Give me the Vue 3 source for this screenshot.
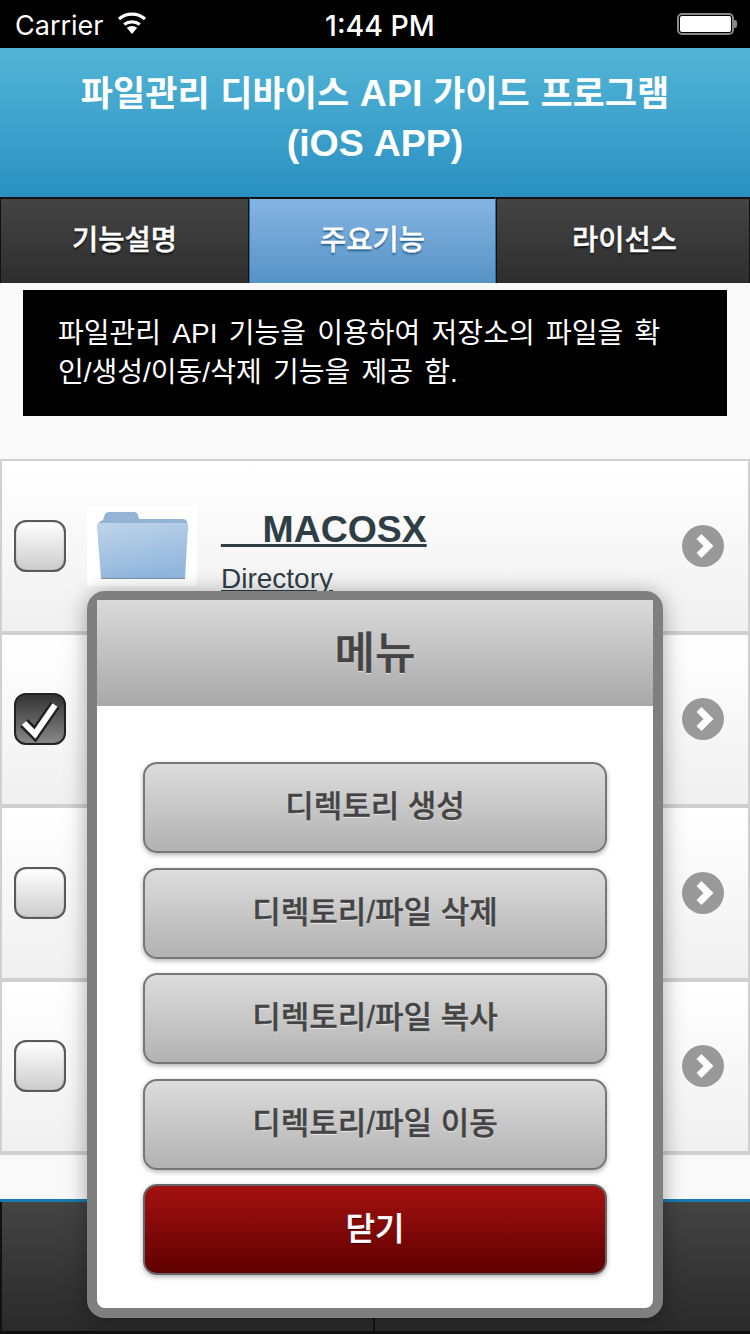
<script setup>
const rows = [
  { id: 1, checked: false, title: '__MACOSX', sub: 'Directory' },
  { id: 2, checked: true },
  { id: 3, checked: false },
  { id: 4, checked: false },
]
const tabs = [
  { label: '기능설명', active: false },
  { label: '주요기능', active: true },
  { label: '라이선스', active: false },
]
const menu = ['디렉토리 생성', '디렉토리/파일 삭제', '디렉토리/파일 복사', '디렉토리/파일 이동']
</script>

<template>
  <div class="page">
    <div class="status">
      <div class="status-left">
        <span class="carrier">Carrier</span>
        <svg class="wifi" width="30" height="24" viewBox="0 0 30 24">
          <path d="M15 23 L9.8 16.8 A8 8 0 0 1 20.2 16.8 Z" fill="#fff" />
          <path d="M7.2 13.6 A12.5 12.5 0 0 1 22.8 13.6" fill="none" stroke="#fff" stroke-width="3.2" />
          <path d="M2 8 A20 20 0 0 1 28 8" fill="none" stroke="#fff" stroke-width="3.2" />
        </svg>
      </div>
      <div class="clock">1:44 PM</div>
      <div class="battery"><div class="battery-body"><div class="battery-fill"></div></div><div class="battery-tip"></div></div>
    </div>

    <header class="head">파일관리 디바이스 <span class="lat">API</span> 가이드 프로그램<br /><span class="lat">(iOS APP)</span></header>

    <nav class="tabs">
      <div v-for="t in tabs" :key="t.label" class="tab" :class="{ on: t.active }">{{ t.label }}</div>
    </nav>

    <main class="content">
      <div class="desc">파일관리 API 기능을 이용하여 저장소의 파일을 확인/생성/이동/삭제 기능을 제공 함.</div>
      <ul class="list">
        <li v-for="r in rows" :key="r.id" class="row">
          <div class="check" :class="{ checked: r.checked }">
            <svg v-if="r.checked" width="48" height="48" viewBox="0 0 48 48">
              <path d="M8 28 L19 39 L39 10" fill="none" stroke="#222" stroke-width="11" />
              <path d="M8 28 L19 39 L39 10" fill="none" stroke="#fff" stroke-width="6" />
            </svg>
          </div>
          <div v-if="r.title" class="thumb">
            <svg width="110" height="80" viewBox="0 0 110 80">
              <defs>
                <linearGradient id="folderFill" x1="0" y1="0" x2="0.3" y2="1">
                  <stop offset="0" stop-color="#bed4e9" />
                  <stop offset="1" stop-color="#92b7dd" />
                </linearGradient>
              </defs>
              <path d="M16 14 L18 8 Q19 6 22 6 L47 6 Q50 6 51 9 L52 13 L96 13 Q99 13 100 16 L101 24 L10 24 L11 18 Q12 15 16 14 Z" fill="#94b4d6" />
              <path d="M12 17 L99 17 Q101 17 101 20 L98 72 Q98 73 96 73 L16 73 Q14 73 14 72 L10 20 Q10 17 12 17 Z" fill="url(#folderFill)" />
              <path d="M14 72 L98 72 L98 73 L14 73 Z" fill="#7d93a8" />
            </svg>
          </div>
          <div v-if="r.title" class="text">
            <div class="name">{{ r.title }}</div>
            <div class="sub">{{ r.sub }}</div>
          </div>
          <svg class="arrow" width="42" height="42" viewBox="0 0 42 42">
            <circle cx="21" cy="21" r="21" fill="#999" />
            <path d="M17 11.5 L26.5 21 L17 30.5" fill="none" stroke="#fff" stroke-width="7" />
          </svg>
        </li>
      </ul>
    </main>

    <footer class="foot">
      <div class="foot-cell"></div>
      <div class="foot-cell"></div>
    </footer>

    <div class="modal">
      <div class="modal-head">메뉴</div>
      <div class="modal-body">
        <div v-for="m in menu" :key="m" class="btn">{{ m }}</div>
        <div class="btn close">닫기</div>
      </div>
    </div>
  </div>
</template>

<style>
html, body { margin: 0; background: #f9f9f9; }
</style>

<style scoped>
.page {
  position: relative;
  width: 750px;
  height: 1334px;
  overflow: hidden;
  display: flex;
  flex-direction: column;
  background: #f9f9f9;
  font-family: "Liberation Sans", "Noto Sans CJK KR", sans-serif;
}
.status {
  height: 48px;
  flex: none;
  background: #000;
  color: #fff;
  display: grid;
  grid-template-columns: 1fr auto 1fr;
  align-items: center;
  padding: 3px 13px 0 15px;
  box-sizing: border-box;
  font-family: "Inter", "Liberation Sans", sans-serif;
}
.status-left { display: flex; align-items: center; gap: 13px; }
.carrier { font-size: 27px; }
.wifi { margin-top: -6px; }
.clock { font-size: 28.5px; font-weight: 500; position: relative; left: 4px; }
.battery { justify-self: end; display: flex; align-items: center; margin-top: -3px; }
.battery-body {
  width: 57px; height: 22px; box-sizing: border-box;
  border: 2px solid #888; border-radius: 5px; padding: 1px; background: #000;
}
.battery-fill { height: 100%; background: #fff; border-radius: 2px; }
.battery-tip { width: 3px; height: 8px; background: #888; border-radius: 0 2px 2px 0; }
.head {
  flex: none;
  height: 149px;
  box-sizing: border-box;
  padding-top: 21px;
  text-align: center;
  color: #fff;
  font-size: 35px;
  line-height: 50px;
  font-weight: 700;
  word-spacing: 1px;
  background: linear-gradient(#52b5d6, #2a90c1);
}
.lat { font-size: 37.5px; line-height: 1; }
.tabs {
  flex: none;
  height: 86px;
  display: grid;
  grid-template-columns: 249px 247px 1fr;
  background: #111;
}
.tab {
  box-sizing: border-box;
  display: flex;
  align-items: center;
  justify-content: center;
  padding-bottom: 7px;
  color: #fff;
  font-size: 28.5px;
  font-weight: 500;
  -webkit-text-stroke: 0.4px currentColor;
  background: linear-gradient(#444, #2e2e2e);
  border: 2px solid #111;
  border-width: 2px 1px 0 1px;
  text-shadow: 0 2px 2px #111;
}
.tab:last-child { padding-left: 3px; }
.tab.on {
  background: linear-gradient(#85b4e2, #5793c6);
  border-color: #2a6da0;
  border-top-color: #111;
  text-shadow: 0 2px 2px #245c90;
}
.content { flex: 1; min-height: 0; background: #f9f9f9; }
.desc {
  margin: 7px 23px 0;
  height: 126px;
  box-sizing: border-box;
  padding: 24px 59px 0 35px;
  background: #000;
  color: #fff;
  font-size: 28px;
  line-height: 39px;
  word-spacing: 3.5px;
  word-break: break-all;
}
.list {
  list-style: none;
  margin: 43px 0 0;
  padding: 0;
  border-top: 2px solid #d0d0d0;
  border-left: 2px solid #d0d0d0;
  border-right: 2px solid #d0d0d0;
}
.row {
  height: 169.5px;
  border-bottom: 4px solid #d0d0d0;
  background: linear-gradient(#fff, #f0f0f0);
  display: flex;
  align-items: center;
}
.check {
  flex: none;
  margin-left: 12px;
  width: 52px;
  height: 52px;
  box-sizing: border-box;
  border: 2px solid #5a5a5a;
  border-radius: 12px;
  background: linear-gradient(#fff, #ccc);
  box-shadow: inset 0 0 1px #555;
  display: flex;
  align-items: center;
  justify-content: center;
}
.check.checked {
  background: linear-gradient(#333, #888);
  border-color: #222;
}
.thumb {
  flex: none;
  width: 110px;
  height: 80px;
  margin-left: 21px;
  background: #fff;
}
.thumb svg { display: block; }
.text {
  margin-left: 24px;
  color: #2f3e46;
  text-decoration: underline;
  margin-top: 12px;
}
.name { font-size: 37.4px; font-weight: 700; line-height: 44px; }
.sub { font-size: 28px; line-height: 34px; margin-top: 11px; }
.arrow { margin-left: auto; margin-right: 24px; flex: none; }
.foot {
  flex: none;
  height: 135px;
  display: grid;
  grid-template-columns: 373px 1fr;
  border-top: 3px solid #1a7ab0;
  border-bottom: 3px solid #111;
  box-sizing: border-box;
  background: linear-gradient(#444, #2a2a2a);
}
.foot-cell { border-left: 2px solid #111; }
.modal {
  position: absolute;
  left: 87px;
  top: 591px;
  width: 576px;
  height: 727px;
  box-sizing: border-box;
  border: 10px solid #7f7f7f;
  border-top-width: 9px;
  border-radius: 18px;
  background: #fff;
  box-shadow: 0 2px 22px rgba(0, 0, 0, 0.35);
  display: flex;
  flex-direction: column;
}
.modal-head {
  flex: none;
  height: 106px;
  display: flex;
  align-items: center;
  justify-content: center;
  padding-bottom: 6px;
  box-sizing: border-box;
  background: linear-gradient(#dadada, #a8a8a8);
  color: #444;
  font-size: 44px;
  font-weight: 500;
  -webkit-text-stroke: 0.5px currentColor;
  text-shadow: 0 1px 1px #eee;
}
.modal-body {
  flex: 1;
  padding: 56px 46px 0;
  display: flex;
  flex-direction: column;
  gap: 14.5px;
}
.btn {
  flex: none;
  height: 91px;
  box-sizing: border-box;
  border: 2px solid #777;
  border-radius: 14px;
  background: linear-gradient(#dcdcdc, #b2b2b2);
  box-shadow: 0 2px 5px rgba(0, 0, 0, 0.3);
  display: flex;
  align-items: center;
  justify-content: center;
  padding-bottom: 8px;
  color: #444;
  font-size: 31px;
  font-weight: 500;
  -webkit-text-stroke: 0.4px currentColor;
  text-shadow: 0 1px 1px #eee;
}
.btn.close {
  background: linear-gradient(#a51111, #5f0000);
  border-color: #666;
  color: #fff;
  font-size: 32px;
  text-shadow: 0 1px 1px #300;
}
</style>
